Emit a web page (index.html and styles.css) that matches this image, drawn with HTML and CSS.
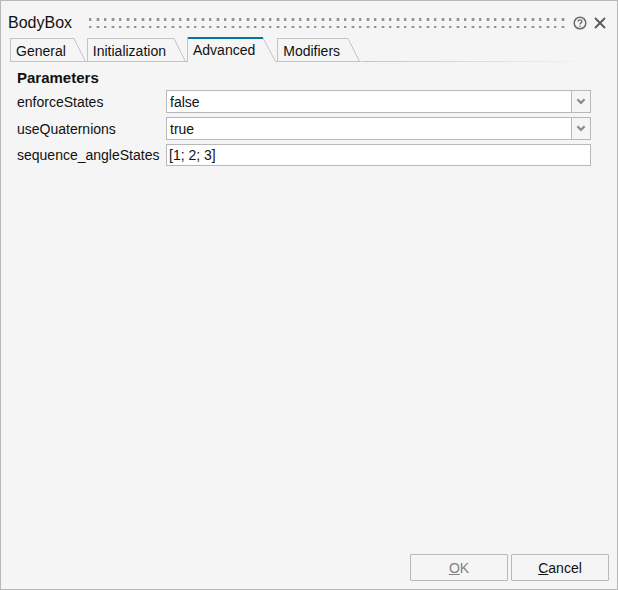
FILE: index.html
```html
<!DOCTYPE html>
<html lang="en">
<head>
<meta charset="utf-8">
<title>BodyBox</title>
<link rel="stylesheet" href="styles.css">
</head>
<body>
<main class="dialog">
  <header class="titlebar">
    <h1 class="title">BodyBox</h1>
    <svg class="grip" height="11" aria-hidden="true">
      <defs>
        <pattern id="dots" width="15" height="8" patternUnits="userSpaceOnUse">
          <path d="M1 1H4V4H1ZM8 1H12V4H8Z" fill="#d2d2d2"/>
          <path d="M1 1H3V4H1ZM9 1H11V4H9Z" fill="#949494"/>
        </pattern>
      </defs>
      <rect width="100%" height="12" fill="url(#dots)"/>
    </svg>
    <button class="icon-button" type="button" aria-label="Help">
      <svg width="14" height="14" viewBox="0 0 14 14" fill="none" stroke="#6a6a6a">
        <circle cx="7" cy="7" r="5.8" stroke-width="1.5"/>
        <path d="M5 5.6C5 3.2 9 3.2 9 5.5C9 7 7 6.8 7 8.6M7 9.6V10.8" stroke-width="1.3"/>
      </svg>
    </button>
    <button class="icon-button" type="button" aria-label="Close">
      <svg width="14" height="14" viewBox="0 0 14 14" fill="none" stroke="#5a5a5a">
        <path d="M2 2L12 12M12 2L2 12" stroke-width="1.8"/>
      </svg>
    </button>
  </header>

  <nav class="tabs" role="tablist">
    <button class="tab" type="button" role="tab"><span class="tab-label">General</span><svg class="slant" width="14" height="24" viewBox="0 0 14 24"><path d="M0 .5H1L12.5 23.5"/></svg></button>
    <button class="tab" type="button" role="tab"><span class="tab-label">Initialization</span><svg class="slant" width="14" height="24" viewBox="0 0 14 24"><path d="M0 .5H1L12.5 23.5"/></svg></button>
    <button class="tab tab-active" type="button" role="tab" aria-selected="true"><span class="tab-label">Advanced</span><svg class="slant" width="14" height="25" viewBox="0 0 14 25"><path d="M0 1L12.5 24.5H14"/></svg></button>
    <button class="tab" type="button" role="tab"><span class="tab-label">Modifiers</span><svg class="slant" width="14" height="24" viewBox="0 0 14 24"><path d="M0 .5H1L12.5 23.5"/></svg></button>
    <span class="tab-line"></span>
  </nav>

  <form class="panel" id="parameters">
    <h2 class="heading">Parameters</h2>
    <div class="fields">
      <label for="enforce">enforceStates</label>
      <div class="combo">
        <select class="field" id="enforce"><option>false</option><option>true</option></select>
        <svg class="arrow" width="20" height="23" viewBox="0 0 20 23"><path d="M6 9L10 13L14 9" fill="none" stroke="#8a8a8a" stroke-width="2.4"/></svg>
      </div>
      <label for="quaternions">useQuaternions</label>
      <div class="combo">
        <select class="field" id="quaternions"><option>true</option><option>false</option></select>
        <svg class="arrow" width="20" height="23" viewBox="0 0 20 23"><path d="M6 9L10 13L14 9" fill="none" stroke="#8a8a8a" stroke-width="2.4"/></svg>
      </div>
      <label for="sequence">sequence_angleStates</label>
      <input class="field text" id="sequence" type="text" value="[1; 2; 3]">
    </div>
  </form>

  <footer class="actions">
    <button class="action" type="submit" form="parameters" disabled><u>O</u>K</button>
    <button class="action" type="button"><u>C</u>ancel</button>
  </footer>
</main>
</body>
</html>
```

FILE: styles.css
```css
* { box-sizing: border-box; }

body {
  margin: 0;
  color: #111;
  background: #f5f5f5;
  font: 14px/16px "Liberation Sans", Arial, sans-serif;
}

button, input, select { font: inherit; color: inherit; }

.dialog {
  display: flex;
  flex-direction: column;
  min-height: 100vh;
  border: 1px solid #b8b8b8;
}

.titlebar {
  display: flex;
  align-items: center;
  height: 36px;
  padding: 7px 10px 0 7px;
}

.title {
  margin: 0;
  font-size: 16px;
  line-height: 20px;
  font-weight: 400;
}

.grip {
  flex: 1;
  min-width: 0;
  margin: 0 8px 0 16px;
}

.icon-button {
  display: flex;
  padding: 0;
  border: 0;
  background: none;
}

.icon-button + .icon-button { margin-left: 6px; }

.tabs {
  display: flex;
  align-items: flex-end;
  padding: 0 25px 0 9px;
}

.tab {
  display: flex;
  height: 24px;
  margin-right: 1px;
  padding: 0;
  border: 0;
  border-left: 1px solid #c4c4c4;
  border-bottom: 1px solid #c4c4c4;
  background: none;
}

.tab:not(:nth-child(4)) { margin-right: 0; }

.tab-label {
  height: 24px;
  padding: 4px 7px 0 5px;
  border-top: 1px solid #c4c4c4;
}

.slant {
  fill: none;
  stroke: #c4c4c4;
}

.tab-active {
  height: 25px;
  border-bottom: 0;
}

.tab-active .tab-label {
  padding: 3px 8px 0 5px;
  border-top: 2px solid #0078a0;
}

.tab-line {
  flex: 1;
  height: 1px;
  background: linear-gradient(to right, #c4c4c4, #f5f5f5);
}

.panel {
  flex: 1;
  padding: 8px 26px 0 16px;
}

.heading {
  margin: 0 0 4px;
  font-size: 15px;
  line-height: 16px;
}

.fields {
  display: grid;
  grid-template-columns: 145px 1fr;
  gap: 4px;
  align-items: center;
}

.combo {
  display: grid;
  grid-template-columns: 1fr 20px;
}

.field {
  grid-area: 1 / 1 / 2 / 3;
  width: 100%;
  height: 23px;
  margin: 0;
  padding: 0 3px;
  border: 1px solid #b8b8b8;
  border-radius: 0;
  background: #fff;
  appearance: none;
}

.text {
  grid-area: auto;
  height: 22px;
  padding: 0 2px;
}

.arrow {
  grid-area: 1 / 2;
  border: 1px solid #b8b8b8;
  background: #f5f5f5;
  pointer-events: none;
}

.actions {
  display: flex;
  justify-content: flex-end;
  gap: 3px;
  padding: 8px;
}

.action {
  width: 98px;
  height: 27px;
  padding: 0;
  border: 1px solid #b8b8b8;
  border-radius: 1px;
  background: #f5f5f5;
}

.action:disabled { color: #808080; }
```
